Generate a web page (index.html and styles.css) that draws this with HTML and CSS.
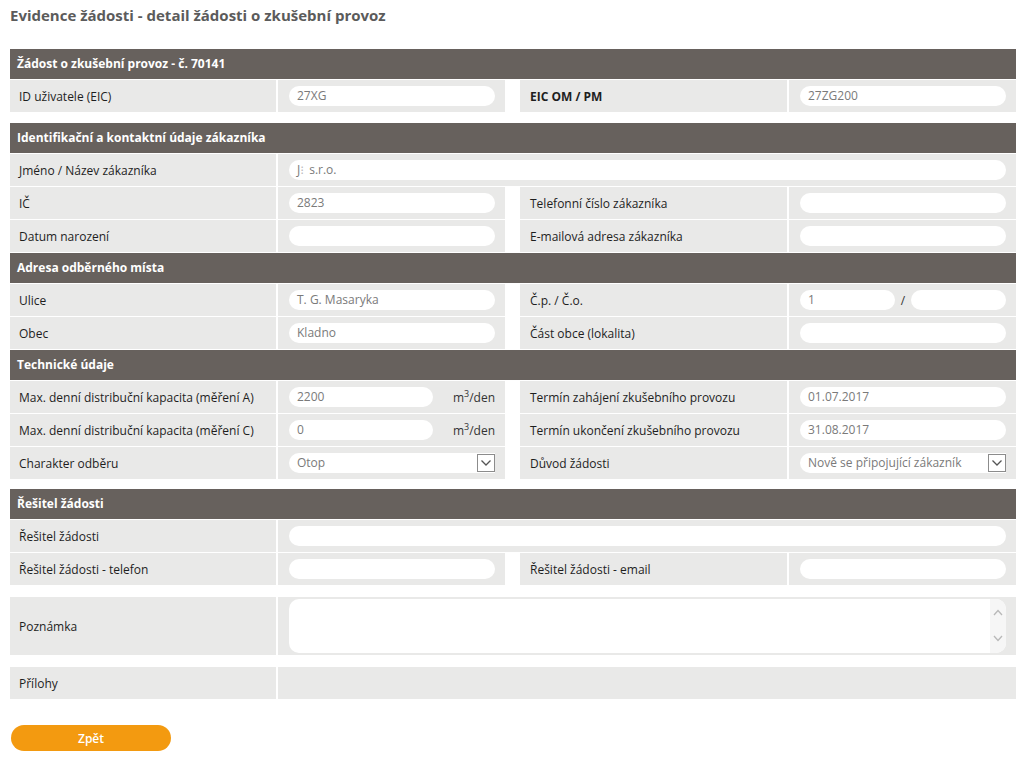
FILE: index.html
```html
<!DOCTYPE html>
<html lang="cs">
<head>
<meta charset="utf-8">
<title>Evidence žádostí</title>
<link rel="stylesheet" href="styles.css">
</head>
<body>
<div class="page">
  <h1 class="title">Evidence žádosti - detail žádosti o zkušební provoz</h1>

  <div class="section first">
    <div class="section-head">Žádost o zkušební provoz - č. 70141</div>
    <div class="row">
      <div class="pair l"><div class="label">ID uživatele (EIC)</div><div class="value"><div class="input">27XG</div></div></div>
      <div class="pair r"><div class="label strong">EIC OM / PM</div><div class="value"><div class="input">27ZG200</div></div></div>
    </div>
  </div>

  <div class="section">
    <div class="section-head">Identifikační a kontaktní údaje zákazníka</div>
    <div class="row">
      <div class="pair l wide"><div class="label">Jméno / Název zákazníka</div><div class="value"><div class="input">J<span class="blur">⁝</span> s.r.o.</div></div></div>
    </div>
    <div class="row">
      <div class="pair l"><div class="label">IČ</div><div class="value"><div class="input">2823</div></div></div>
      <div class="pair r"><div class="label">Telefonní číslo zákazníka</div><div class="value"><div class="input"></div></div></div>
    </div>
    <div class="row">
      <div class="pair l"><div class="label">Datum narození</div><div class="value"><div class="input"></div></div></div>
      <div class="pair r"><div class="label">E-mailová adresa zákazníka</div><div class="value"><div class="input"></div></div></div>
    </div>
    <div class="section-head">Adresa odběrného místa</div>
    <div class="row">
      <div class="pair l"><div class="label">Ulice</div><div class="value"><div class="input">T. G. Masaryka</div></div></div>
      <div class="pair r"><div class="label">Č.p. / Č.o.</div><div class="value split"><div class="input short">1</div><span class="slash">/</span><div class="input short2"></div></div></div>
    </div>
    <div class="row">
      <div class="pair l"><div class="label">Obec</div><div class="value"><div class="input">Kladno</div></div></div>
      <div class="pair r"><div class="label">Část obce (lokalita)</div><div class="value"><div class="input"></div></div></div>
    </div>
    <div class="section-head">Technické údaje</div>
    <div class="row">
      <div class="pair l"><div class="label">Max. denní distribuční kapacita (měření A)</div><div class="value unit-cell"><div class="input unit-input">2200</div><span class="unit">m<sup>3</sup>/den</span></div></div>
      <div class="pair r"><div class="label">Termín zahájení zkušebního provozu</div><div class="value"><div class="input">01.07.2017</div></div></div>
    </div>
    <div class="row">
      <div class="pair l"><div class="label">Max. denní distribuční kapacita (měření C)</div><div class="value unit-cell"><div class="input unit-input">0</div><span class="unit">m<sup>3</sup>/den</span></div></div>
      <div class="pair r"><div class="label">Termín ukončení zkušebního provozu</div><div class="value"><div class="input">31.08.2017</div></div></div>
    </div>
    <div class="row">
      <div class="pair l"><div class="label">Charakter odběru</div><div class="value"><div class="input select"><span class="sel-text">Otop</span><span class="arrow"><svg width="16" height="16" viewBox="0 0 16 16"><path d="M3.5 5.5 L8 10 L12.5 5.5" fill="none" stroke="#555" stroke-width="1.3"/></svg></span></div></div></div>
      <div class="pair r"><div class="label">Důvod žádosti</div><div class="value"><div class="input select"><span class="sel-text">Nově se připojující zákazník</span><span class="arrow"><svg width="16" height="16" viewBox="0 0 16 16"><path d="M3.5 5.5 L8 10 L12.5 5.5" fill="none" stroke="#555" stroke-width="1.3"/></svg></span></div></div></div>
    </div>
  </div>

  <div class="section">
    <div class="section-head">Řešitel žádosti</div>
    <div class="row">
      <div class="pair l wide"><div class="label">Řešitel žádosti</div><div class="value"><div class="input"></div></div></div>
    </div>
    <div class="row">
      <div class="pair l"><div class="label">Řešitel žádosti - telefon</div><div class="value"><div class="input"></div></div></div>
      <div class="pair r"><div class="label">Řešitel žádosti - email</div><div class="value"><div class="input"></div></div></div>
    </div>
  </div>

  <div class="section note">
    <div class="row tall">
      <div class="pair l wide"><div class="label">Poznámka</div><div class="value"><div class="textarea"><div class="scroll"><svg width="14" height="52" viewBox="0 0 14 52"><path d="M3 15 L7 10.5 L11 15" fill="none" stroke="#b9b9b9" stroke-width="1.3"/><path d="M3 36 L7 40.5 L11 36" fill="none" stroke="#b9b9b9" stroke-width="1.3"/></svg></div></div></div></div>
    </div>
  </div>

  <div class="section attach">
    <div class="row">
      <div class="pair l wide"><div class="label">Přílohy</div><div class="value"></div></div>
    </div>
  </div>

  <button class="btn" type="button">Zpět</button>
</div>
</body>
</html>
```

FILE: styles.css
```css
* { box-sizing: border-box; }

body {
  margin: 0;
  font-family: "Open Sans", "DejaVu Sans", sans-serif;
  font-size: 12px;
  color: #1e1e1e;
  background: #fff;
}

.page {
  width: 1016px;
  padding: 5px 0 0 10px;
}

.title {
  margin: 0 0 24px;
  height: 20px;
  line-height: 20px;
  font-size: 15px;
  font-weight: bold;
  color: #5b5b5b;
}

.section {
  display: flex;
  flex-direction: column;
  gap: 1px;
  margin-bottom: 10px;
}

.section.first { margin-bottom: 11px; }

.section-head {
  height: 30px;
  line-height: 30px;
  padding-left: 7px;
  background: #67615d;
  color: #fff;
  font-weight: bold;
  font-size: 12px;
}

.row {
  display: flex;
  height: 32px;
}

.pair {
  display: flex;
  gap: 2px;
}

.pair.r { margin-left: 15px; }
.pair.wide { flex: 1; }

.label {
  display: flex;
  align-items: center;
  background: #e9e9e8;
  white-space: nowrap;
}

.pair.l .label { width: 266px; padding-left: 9px; }
.pair.r .label { width: 267px; padding-left: 10px; }
.label.strong { font-weight: bold; }

.value {
  width: 227px;
  display: flex;
  align-items: center;
  padding: 0 10px 0 11px;
  background: #e9e9e8;
}

.pair.wide .value { flex: 1; }

.input {
  flex: 1;
  height: 20px;
  line-height: 20px;
  padding: 0 8px;
  border-radius: 10px;
  background: #fff;
  color: #7a7a7a;
  white-space: nowrap;
  overflow: hidden;
}

.blur { color: #bbb; letter-spacing: 2px; }

.input.short { flex: 0 0 95px; }
.slash { width: 16px; text-align: center; color: #333; }
.input.short2 { flex: 1; }

.input.unit-input { flex: 0 0 144px; }
.unit {
  margin-left: auto;
  color: #333;
}
.unit sup { font-size: 9px; line-height: 0; vertical-align: 5px; }

.select {
  display: flex;
  align-items: center;
  padding-right: 0;
  overflow: visible;
  border-radius: 10px 0 0 10px;
}
.sel-text { flex: 1; overflow: hidden; }
.arrow {
  flex: 0 0 18px;
  width: 18px;
  height: 18px;
  border: 1px solid #8c8c8c;
  background: #fff;
  display: flex;
  align-items: center;
  justify-content: center;
}

.note { margin-top: 12px; margin-bottom: 12px; }
.row.tall { height: 58px; }

.textarea {
  flex: 1;
  height: 54px;
  border-radius: 10px;
  background: #fff;
  display: flex;
  justify-content: flex-end;
  overflow: hidden;
}
.scroll {
  width: 16px;
  background: #f6f6f6;
  display: flex;
  align-items: center;
  justify-content: center;
}

.attach { margin-bottom: 26px; }

.btn {
  display: block;
  margin-left: 1px;
  width: 160px;
  height: 26px;
  border: none;
  border-radius: 13px;
  background: #f39a10;
  color: #fff;
  font-family: "Open Sans", sans-serif;
  font-size: 12px;
  font-weight: 600;
  padding: 0;
}
```
